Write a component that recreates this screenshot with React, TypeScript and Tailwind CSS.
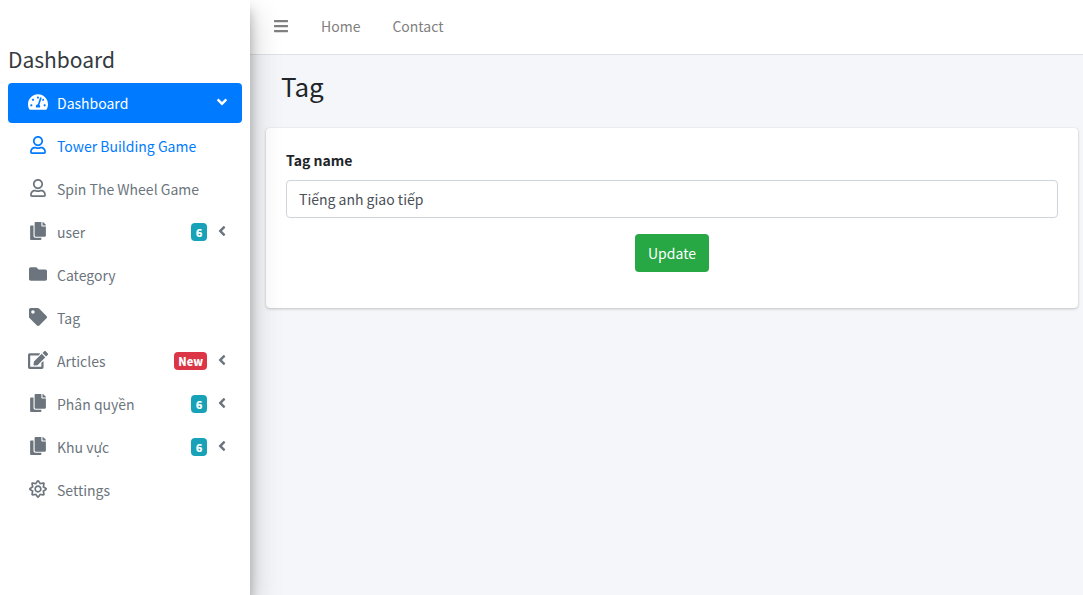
import { useState } from "react";
import type { ComponentType } from "react";
import {
  FaAngleDown,
  FaAngleLeft,
  FaBars,
  FaCopy,
  FaEdit,
  FaFolder,
  FaRegSun,
  FaRegUser,
  FaTachometerAlt,
  FaTag,
} from "react-icons/fa";

type NavItem = {
  label: string;
  icon: ComponentType<{ className?: string }>;
  iconClass: string;
  badge?: string;
  badgeClass?: string;
  expandable?: boolean;
  current?: boolean;
};

const items: NavItem[] = [
  { label: "Tower Building Game", icon: FaRegUser, iconClass: "size-[18px]", current: true },
  { label: "Spin The Wheel Game", icon: FaRegUser, iconClass: "size-[18px]" },
  { label: "user", icon: FaCopy, iconClass: "size-[18px]", badge: "6", badgeClass: "bg-[#17a2b8]", expandable: true },
  { label: "Category", icon: FaFolder, iconClass: "size-[18px]" },
  { label: "Tag", icon: FaTag, iconClass: "size-[18px]" },
  { label: "Articles", icon: FaEdit, iconClass: "size-5", badge: "New", badgeClass: "bg-[#dc3545]", expandable: true },
  { label: "Phân quyền", icon: FaCopy, iconClass: "size-[18px]", badge: "6", badgeClass: "bg-[#17a2b8]", expandable: true },
  { label: "Khu vực", icon: FaCopy, iconClass: "size-[18px]", badge: "6", badgeClass: "bg-[#17a2b8]", expandable: true },
  { label: "Settings", icon: FaRegSun, iconClass: "size-[18px]" },
];

function SidebarLink({ item }: { item: NavItem }) {
  const Icon = item.icon;
  return (
    <a
      href="#"
      className={`flex h-10 items-center rounded pr-3 pl-4 ${item.current ? "text-[#007bff]" : "text-[#6c757d]"}`}
    >
      <span className="mr-1 flex w-7 shrink-0 justify-center pb-0.5">
        <Icon className={item.iconClass} />
      </span>
      <span className="grow pl-px">{item.label}</span>
      {item.badge && (
        <span className={`min-w-4 rounded px-1 text-center text-[11px] leading-[18px] font-black text-white ${item.badgeClass}`}>
          {item.badge}
        </span>
      )}
      {item.expandable && <FaAngleLeft className="mb-0.5 ml-[7px] size-4" />}
    </a>
  );
}

export default function App() {
  const [name, setName] = useState("Tiếng anh giao tiếp");

  return (
    <div className="flex min-h-screen bg-[#f4f6f9] font-['Noto_Sans_CJK_SC','Noto_Sans',sans-serif] text-[14px] leading-6 text-[#212529]">
      <aside className="z-10 w-[250px] shrink-0 bg-white px-2 pt-11 shadow-[0_14px_28px_rgba(0,0,0,0.25),0_10px_10px_rgba(0,0,0,0.22)]">
        <h2 className="mb-2 text-[21px] leading-[31px] text-[#343a40]">Dashboard</h2>
        <nav className="flex flex-col gap-[3px]">
          <a href="#" className="flex h-10 items-center rounded bg-[#007bff] pr-3 pl-4 text-white">
            <span className="mr-1 flex w-7 shrink-0 justify-center pb-0.5">
              <FaTachometerAlt className="size-5" />
            </span>
            <span className="grow pl-px">Dashboard</span>
            <FaAngleDown className="mb-0.5 size-4" />
          </a>
          {items.map((item) => (
            <SidebarLink key={item.label} item={item} />
          ))}
        </nav>
      </aside>

      <div className="min-w-0 grow">
        <header className="flex h-[55px] items-center border-b border-[#dee2e6] bg-white px-2 pb-0.5 text-[#808080]">
          <button type="button" aria-label="Toggle sidebar" className="pr-4 pl-[15px]">
            <FaBars className="size-4" />
          </button>
          <nav className="flex">
            <a href="#" className="px-4">Home</a>
            <a href="#" className="px-4">Contact</a>
          </nav>
        </header>

        <main className="pr-[5px] pl-4">
          <h1 className="px-[15px] pt-[13px] pb-6 text-[26px] leading-9">Tag</h1>
          <form
            onSubmit={(event) => event.preventDefault()}
            className="rounded bg-white px-5 pt-5 pb-9 shadow-[0_0_1px_rgba(0,0,0,0.125),0_1px_3px_rgba(0,0,0,0.2)]"
          >
            <label htmlFor="tag-name" className="mb-2 block font-bold">Tag name</label>
            <input
              id="tag-name"
              type="text"
              value={name}
              onChange={(event) => setName(event.target.value)}
              className="mb-4 block h-[38px] w-full rounded border border-[#ced4da] px-3 text-[#495057]"
            />
            <button type="submit" className="mx-auto block h-[38px] rounded bg-[#28a745] px-[13px] text-white">
              Update
            </button>
          </form>
        </main>
      </div>
    </div>
  );
}
